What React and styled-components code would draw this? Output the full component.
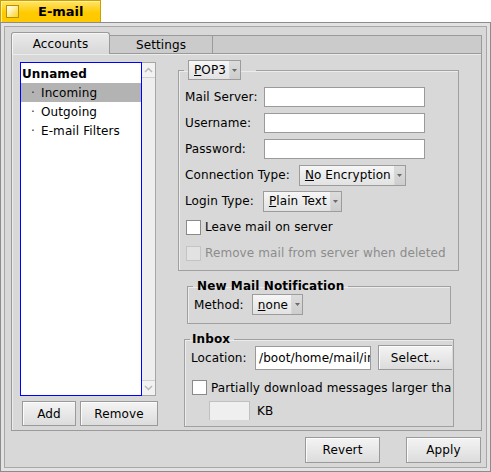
import React from "react";
import styled, { createGlobalStyle } from "styled-components";

const GlobalStyle = createGlobalStyle`
  html, body {
    margin: 0;
    padding: 0;
    background: #fff;
  }
  body {
    font-family: "DejaVu Sans", "Noto Sans", sans-serif;
    font-size: 12px;
    letter-spacing: 0.1px;
    color: #000;
  }
  * {
    box-sizing: border-box;
  }
`;

const Window = styled.div`
  width: 491px;
  height: 472px;
  display: flex;
  flex-direction: column;
`;

const TitleTab = styled.div`
  width: 101px;
  height: 22px;
  display: flex;
  align-items: center;
  padding-left: 5px;
  background: linear-gradient(#ffe46e, #ffcb00 55%, #ffc800);
  border: 1px solid #c9a200;
  border-bottom: none;
  box-shadow: inset 1px 1px 0 #fff0a0;
`;

const CloseBox = styled.div`
  width: 13px;
  height: 13px;
  border: 1px solid #b89000;
  background: linear-gradient(135deg, #ffffff 0%, #fff3b8 35%, #ffd21a 100%);
`;

const TitleText = styled.span`
  margin-left: 19px;
  font-weight: bold;
  font-size: 13px;
  letter-spacing: 0;
`;

const Frame = styled.div`
  flex: 1;
  display: flex;
  border: 1px solid #8c8c8c;
  background: #e2e2e2;
  padding: 3px;
`;

const Content = styled.div`
  flex: 1;
  display: flex;
  flex-direction: column;
  border: 1px solid #a8a8a8;
  background: #d8d8d8;
  padding: 5px 4px 0 6px;
`;

const TabView = styled.div`
  flex: 1;
  display: flex;
  flex-direction: column;
`;

const TabBar = styled.div`
  height: 21px;
  display: flex;
  align-items: flex-end;
  position: relative;
  z-index: 1;
`;

const Tab = styled.div`
  width: ${(p) => p.$width}px;
  height: ${(p) => (p.$active ? 22 : 18)}px;
  margin-bottom: ${(p) => (p.$active ? -1 : 0)}px;
  display: flex;
  align-items: center;
  justify-content: center;
  font-size: 12px;
  border: 1px solid #9a9a9a;
  border-bottom: none;
  border-left: ${(p) => (p.$active ? "1px solid #9a9a9a" : "none")};
  border-radius: ${(p) => (p.$active ? "3px 3px 0 0" : "0")};
  background: ${(p) =>
    p.$active ? "linear-gradient(#eaeaea, #d8d8d8)" : "#cbcbcb"};
  box-shadow: ${(p) => (p.$active ? "inset 1px 1px 0 #f6f6f6" : "none")};
  padding-top: ${(p) => (p.$active ? 0 : 1)}px;
`;

const TabFill = styled.div`
  flex: 1;
  height: 18px;
  background: #cbcbcb;
  border-top: 1px solid #9a9a9a;
  border-right: 1px solid #9a9a9a;
`;

const Panel = styled.div`
  height: 378px;
  display: flex;
  gap: 22px;
  border: 1px solid #9a9a9a;
  box-shadow: inset 1px 1px 0 #ececec;
  padding: 6px 0 0 8px;
`;

const LeftCol = styled.div`
  width: 136px;
  display: flex;
  flex-direction: column;
  padding-top: 2px;
`;

const ListRow = styled.div`
  height: 334px;
  display: flex;
`;

const ListBox = styled.div`
  width: 122px;
  background: #fff;
  border: 1px solid #0000ff;
  padding-top: 1px;
`;

const ListItem = styled.div`
  height: 19px;
  display: flex;
  align-items: center;
  padding-left: ${(p) => (p.$sub ? 10 : 1)}px;
  font-weight: ${(p) => (p.$bold ? "bold" : "normal")};
  background: ${(p) => (p.$selected ? "#b3b3b3" : "transparent")};
  white-space: nowrap;
`;

const Bullet = styled.span`
  width: 10px;
  color: #333;
`;

const ScrollBar = styled.div`
  width: 14px;
  display: flex;
  flex-direction: column;
  justify-content: space-between;
  background: #eeeeee;
  border: 1px solid #a6a6a6;
  border-left: none;
`;

const ScrollArrow = styled.div`
  height: 15px;
  display: flex;
  align-items: center;
  justify-content: center;
  background: #f2f2f2;
  border-top: ${(p) => (p.$down ? "1px solid #d0d0d0" : "none")};
  border-bottom: ${(p) => (p.$down ? "none" : "1px solid #d0d0d0")};
`;

const ButtonRow = styled.div`
  display: flex;
  gap: 4px;
  margin-top: 5px;
  padding-left: 2px;
`;

const Button = styled.button`
  width: ${(p) => p.$width}px;
  height: ${(p) => p.$height || 26}px;
  margin-left: ${(p) => p.$left || 0}px;
  flex-shrink: 0;
  font-family: inherit;
  font-size: 12px;
  letter-spacing: 0.1px;
  color: #000;
  border: 1px solid #9a9a9a;
  border-radius: 0;
  background: linear-gradient(#f4f4f4, #dcdcdc);
  box-shadow: inset 1px 1px 0 #fcfcfc;
  padding: 0;
`;

const RightCol = styled.div`
  display: flex;
  flex-direction: column;
  align-items: flex-start;
`;

const Group = styled.fieldset`
  margin: ${(p) => p.$top || 0}px 0 0 ${(p) => p.$left || 0}px;
  width: ${(p) => p.$width}px;
  border: 1px solid #a0a0a0;
  box-shadow: 1px 1px 0 #ececec inset;
  padding: ${(p) => p.$pad};
  min-width: 0;
`;

const Legend = styled.legend`
  margin-left: -1px;
  padding: ${(p) => p.$pad};
  font-weight: bold;
  font-size: 12px;
  line-height: ${(p) => p.$lh || 14}px;
`;

const Row = styled.div`
  height: ${(p) => p.$h || 20}px;
  margin-top: ${(p) => p.$gap || 0}px;
  display: flex;
  align-items: center;
  white-space: nowrap;
`;

const Label = styled.span`
  width: ${(p) => (p.$width ? `${p.$width}px` : "auto")};
  margin-left: ${(p) => p.$left || 0}px;
  margin-right: ${(p) => p.$gap || 0}px;
  flex-shrink: 0;
`;

const TextInput = styled.div`
  width: ${(p) => p.$width}px;
  height: ${(p) => p.$height || 20}px;
  margin-left: ${(p) => p.$left || 0}px;
  border: 1px solid ${(p) => (p.$disabled ? "#c0c0c0" : "#9a9a9a")};
  background: ${(p) => (p.$disabled ? "#efefef" : "#fff")};
  display: flex;
  align-items: center;
  padding-left: 3px;
  overflow: hidden;
  white-space: nowrap;
  flex-shrink: 0;
`;

const Menu = styled.div`
  height: ${(p) => p.$height || 21}px;
  display: inline-flex;
  align-items: stretch;
  border: 1px solid #9c9c9c;
  background: linear-gradient(#f6f6f6, #e2e2e2);
  font-weight: normal;
  flex-shrink: 0;
`;

const MenuText = styled.span`
  display: flex;
  align-items: center;
  padding: 0 3px 0 5px;
`;

const MenuArrow = styled.span`
  width: 11px;
  display: flex;
  align-items: center;
  justify-content: center;
  background: linear-gradient(#dcdcdc, #cdcdcd);
  border-left: 1px solid #d8d8d8;
`;

const Mnemonic = styled.span`
  text-decoration: underline;
`;

const Check = styled.span`
  width: 15px;
  height: 15px;
  margin-left: 1px;
  margin-right: 4px;
  border: 1px solid ${(p) => (p.$disabled ? "#c4c4c4" : "#8a8a8a")};
  background: ${(p) => (p.$disabled ? "#e2e2e2" : "#fff")};
  flex-shrink: 0;
`;

const CheckText = styled.span`
  color: ${(p) => (p.$disabled ? "#8c8c8c" : "#000")};
`;

const Clip = styled.div`
  overflow: hidden;
`;

const Footer = styled.div`
  height: 35px;
  display: flex;
  justify-content: flex-end;
  gap: 26px;
  padding: 5px 1px 0 0;
`;

const Chevron = ({ down }) => (
  <svg width="9" height="6" viewBox="0 0 9 6">
    <path
      d={down ? "M1 1 L4.5 4.5 L8 1" : "M1 5 L4.5 1.5 L8 5"}
      fill="none"
      stroke="#b8b8b8"
      strokeWidth="1.5"
    />
  </svg>
);

const DownTri = () => (
  <svg width="5" height="3" viewBox="0 0 5 3">
    <path d="M0 0 H5 L2.5 3 Z" fill="#6a6a6a" />
  </svg>
);

const MenuField = ({ first, rest, height }) => (
  <Menu $height={height}>
    <MenuText>
      <Mnemonic>{first}</Mnemonic>
      {rest}
    </MenuText>
    <MenuArrow>
      <DownTri />
    </MenuArrow>
  </Menu>
);

const CheckRow = ({ label, disabled, gap, h }) => (
  <Row $gap={gap} $h={h}>
    <Check $disabled={disabled} />
    <CheckText $disabled={disabled}>{label}</CheckText>
  </Row>
);

const App = () => {
  return (
    <Window>
      <GlobalStyle />
      <TitleTab>
        <CloseBox />
        <TitleText>E-mail</TitleText>
      </TitleTab>
      <Frame>
        <Content>
          <TabView>
            <TabBar>
              <Tab $active $width={99}>
                Accounts
              </Tab>
              <Tab $width={103}>Settings</Tab>
              <TabFill />
            </TabBar>
            <Panel>
              <LeftCol>
                <ListRow>
                  <ListBox>
                    <ListItem $bold>Unnamed</ListItem>
                    <ListItem $sub $selected>
                      <Bullet>·</Bullet>Incoming
                    </ListItem>
                    <ListItem $sub>
                      <Bullet>·</Bullet>Outgoing
                    </ListItem>
                    <ListItem $sub>
                      <Bullet>·</Bullet>E-mail Filters
                    </ListItem>
                  </ListBox>
                  <ScrollBar>
                    <ScrollArrow>
                      <Chevron />
                    </ScrollArrow>
                    <ScrollArrow $down>
                      <Chevron down />
                    </ScrollArrow>
                  </ScrollBar>
                </ListRow>
                <ButtonRow>
                  <Button $width={54} $height={25}>
                    Add
                  </Button>
                  <Button $width={78} $height={25}>
                    Remove
                  </Button>
                </ButtonRow>
              </LeftCol>

              <RightCol>
                <Group $width={281} $pad="7px 6px 7px 6px">
                  <Legend $pad="0 15px 0 4px" $lh={20}>
                    <MenuField first="P" rest="OP3" height={20} />
                  </Legend>
                  <Row>
                    <Label $width={79}>Mail Server:</Label>
                    <TextInput $width={161} />
                  </Row>
                  <Row $gap={6}>
                    <Label $width={79}>Username:</Label>
                    <TextInput $width={161} />
                  </Row>
                  <Row $gap={6}>
                    <Label $width={79}>Password:</Label>
                    <TextInput $width={161} />
                  </Row>
                  <Row $gap={6}>
                    <Label $gap={9}>Connection Type:</Label>
                    <MenuField first="N" rest="o Encryption" />
                  </Row>
                  <Row $gap={6}>
                    <Label $gap={9}>Login Type:</Label>
                    <MenuField first="P" rest="lain Text" />
                  </Row>
                  <CheckRow gap={6} label="Leave mail on server" />
                  <CheckRow
                    gap={6}
                    disabled
                    label="Remove mail from server when deleted"
                  />
                </Group>

                <Group $width={264} $left={9} $top={8} $pad="1px 6px 8px 6px">
                  <Legend $pad="0 4px">New Mail Notification</Legend>
                  <Row $h={21}>
                    <Label $gap={8}>Method:</Label>
                    <MenuField first="n" rest="one" />
                  </Row>
                </Group>

                <Group $width={270} $left={6} $top={9} $pad="0 1px 6px 6px">
                  <Legend $pad="0 4px 0 2px" $lh={12}>
                    Inbox
                  </Legend>
                  <Clip>
                    <Row $h={25}>
                      <Label $width={64}>Location:</Label>
                      <TextInput $width={116} $height={24}>
                        /boot/home/mail/in
                      </TextInput>
                      <Button $width={75} $height={25} $left={7}>
                        Select...
                      </Button>
                    </Row>
                    <CheckRow
                      gap={7}
                      h={21}
                      label="Partially download messages larger than"
                    />
                    <Row $gap={3} $h={19}>
                      <TextInput $width={41} $height={20} $disabled $left={18} />
                      <Label $left={7}>KB</Label>
                    </Row>
                  </Clip>
                </Group>
              </RightCol>
            </Panel>
          </TabView>
          <Footer>
            <Button $width={75}>Revert</Button>
            <Button $width={75}>Apply</Button>
          </Footer>
        </Content>
      </Frame>
    </Window>
  );
};

export default App;
